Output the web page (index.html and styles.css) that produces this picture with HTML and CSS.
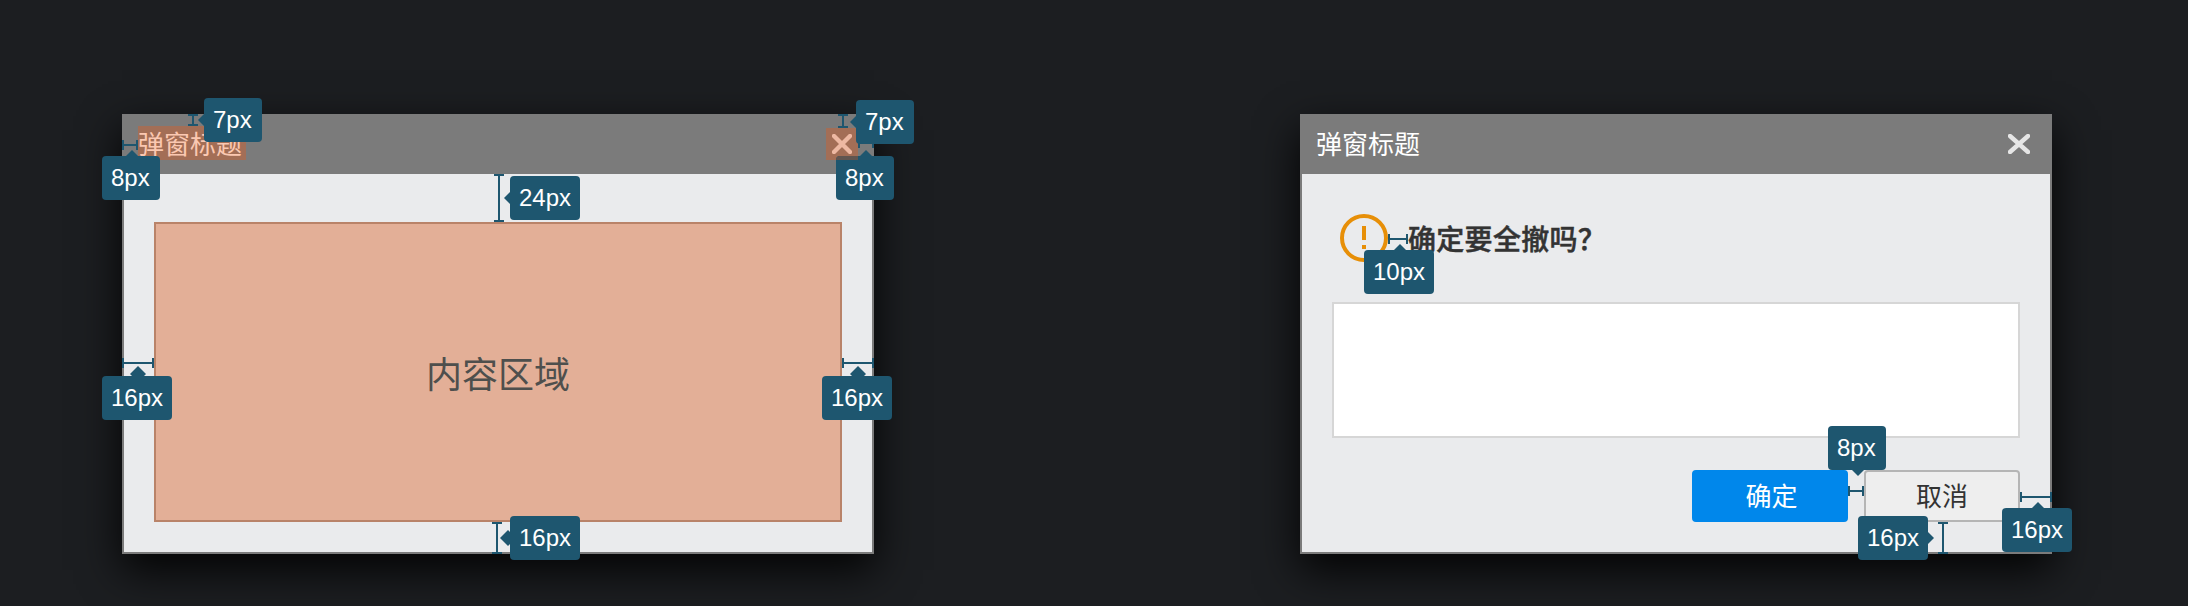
FILE: index.html
```html
<!DOCTYPE html>
<html lang="zh-CN">
<head>
<meta charset="utf-8">
<title>弹窗标题</title>
<link rel="stylesheet" href="styles.css">
</head>
<body>
<main class="board">
  <section class="dialog">
    <header class="dialog-header">
      <h2 class="dialog-title marked">弹窗标题</h2>
      <span class="close marked"><svg width="20" height="20" viewBox="0 0 20 20"><path d="M2 2L18 18M18 2L2 18"/></svg></span>
    </header>
    <div class="dialog-body">
      <div class="content-area">内容区域</div>
    </div>

    <i class="rule v r-title-top"></i><i class="rule h r-title-left"></i>
    <i class="rule v r-close-top"></i><i class="rule h r-close-right"></i>
    <i class="rule v r-body-top"></i><i class="rule h r-body-left"></i>
    <i class="rule h r-body-right"></i><i class="rule v r-body-bottom"></i>
    <span class="tag left t-title-top">7px</span>
    <span class="tag up t-title-left">8px</span>
    <span class="tag up t-close-right">8px</span>
    <i class="tag-overlap"></i>
    <span class="tag left t-close-top">7px</span>
    <span class="tag left t-body-top">24px</span>
    <span class="tag up far wide-left t-body-left">16px</span>
    <span class="tag up far wide-left t-body-right">16px</span>
    <span class="tag left far t-body-bottom">16px</span>
  </section>

  <section class="dialog">
    <header class="dialog-header">
      <h2 class="dialog-title">弹窗标题</h2>
      <span class="close"><svg width="22" height="20" viewBox="0 0 22 20"><path d="M2 2L20 18M20 2L2 18"/></svg></span>
    </header>
    <div class="dialog-body confirm">
      <div class="message">
        <svg class="warning" width="48" height="48" viewBox="0 0 48 48"><circle cx="24" cy="24" r="22"/><path d="M24 12V26M24 31V35"/></svg>
        <p class="question">确定要全撤吗？</p>
      </div>
      <div class="input-box"></div>
      <div class="actions">
        <button class="btn primary">确定</button>
        <button class="btn">取消</button>
      </div>
    </div>

    <i class="rule h r-icon"></i><i class="rule h r-buttons"></i>
    <i class="rule v r-actions-bottom"></i><i class="rule h r-actions-right"></i>
    <span class="tag up t-icon">10px</span>
    <span class="tag down t-buttons">8px</span>
    <span class="tag right t-actions-bottom">16px</span>
    <span class="tag up t-actions-right">16px</span>
  </section>
</main>
</body>
</html>
```
FILE: styles.css
```css
* { box-sizing: border-box; }
body {
  margin: 0;
  background: #1c1e21;
  font-family: "Liberation Sans", "Noto Sans CJK SC", sans-serif;
}
.board {
  display: flex;
  gap: 426px;
  width: 2188px;
  height: 606px;
  padding: 114px 0 0 122px;
  overflow: hidden;
}
.dialog {
  position: relative;
  display: flex;
  flex-direction: column;
  flex: none;
  width: 752px;
  height: 440px;
  box-shadow: 0 16px 40px rgba(0, 0, 0, .9);
}
.dialog-header {
  display: flex;
  align-items: flex-start;
  justify-content: space-between;
  height: 60px;
  padding: 12px 16px 0;
  background: #7b7b7b;
}
.dialog-title {
  width: 108px;
  height: 34px;
  margin: 0;
  color: #fff;
  font: 400 26px/34px "Noto Sans CJK SC", sans-serif;
  white-space: nowrap;
}
.close {
  display: flex;
  align-items: center;
  justify-content: center;
  width: 32px;
  height: 32px;
  margin-top: 2px;
}
.dialog:last-child .close { margin-right: 1px; }
.close path { fill: none; stroke: #e6e6e6; stroke-width: 4.4; stroke-linecap: round; }
.dialog-title.marked { background: #a36e56; color: #fbc8b1; }
.close.marked { background: #a36e56; }
.close.marked path { stroke: #edb8a2; }
.dialog-body {
  flex: 1;
  display: flex;
  flex-direction: column;
  padding: 48px 30px 30px;
  border: solid #7b7b7b;
  border-width: 0 2px 2px;
  background: #eaebed;
}
.content-area {
  flex: 1;
  display: flex;
  align-items: center;
  justify-content: center;
  border: 2px solid #b98369;
  background: #e3af97;
  color: #4e4f4d;
  font: 400 36px/50px "Noto Sans CJK SC", sans-serif;
}
.dialog-body.confirm { padding-top: 40px; }
.message {
  display: flex;
  align-items: center;
  gap: 20px;
  height: 48px;
  margin: 0 0 40px 8px;
}
.warning { fill: none; stroke: #e78f08; stroke-width: 4; }
.question {
  margin: 0;
  color: #333;
  font: 500 28px/48px "Noto Sans CJK SC", sans-serif;
  letter-spacing: .3px;
  -webkit-text-stroke: .5px #333;
}
.input-box { height: 136px; border: 2px solid #d6d6d6; background: #fff; }
.actions {
  display: flex;
  justify-content: flex-end;
  gap: 16px;
  margin-top: 32px;
}
.btn {
  width: 156px;
  height: 52px;
  padding: 0 0 2px;
  border: 2px solid #b5b5b5;
  border-radius: 4px;
  background: #eee;
  color: #333;
  font: 400 26px/46px "Noto Sans CJK SC", sans-serif;
}
.btn.primary {
  padding-left: 3px;
  border-color: #0087eb;
  background: #0087eb;
  color: #fff;
}

/* Measuring rules: a 2px line with a cap at each end */
.rule { position: absolute; }
.rule.h {
  height: 10px;
  border: solid #1e566f;
  border-width: 0 2px;
  background: linear-gradient(#1e566f, #1e566f) 0 4px / 100% 2px no-repeat;
}
.rule.v {
  width: 10px;
  border: solid #1e566f;
  border-width: 2px 0;
  background: linear-gradient(#1e566f, #1e566f) 4px 0 / 2px 100% no-repeat;
}
.r-title-top { left: 66px; top: 0; height: 12px; }
.r-title-left { left: 0; top: 26px; width: 16px; }
.r-close-top { left: 716px; top: 0; height: 14px; }
.r-close-right { left: 736px; top: 24px; width: 16px; }
.r-body-top { left: 372px; top: 60px; height: 48px; }
.r-body-left { left: 0; top: 244px; width: 32px; }
.r-body-right { left: 720px; top: 244px; width: 32px; }
.r-body-bottom { left: 370px; top: 408px; height: 32px; }
.r-icon { left: 88px; top: 120px; width: 20px; }
.r-buttons { left: 548px; top: 372px; width: 16px; }
.r-actions-bottom { left: 638px; top: 408px; height: 32px; }
.r-actions-right { left: 720px; top: 378px; width: 32px; }

/* Measurement tags with a diamond pointer */
.tag {
  --reach: 6px;
  position: absolute;
  height: 44px;
  padding: 0 9px;
  border-radius: 4px;
  background: #1e566f;
  color: #fff;
  font-size: 24px;
  line-height: 44px;
  white-space: nowrap;
}
.tag::before {
  content: "";
  position: absolute;
  width: 16px;
  height: 16px;
  background: #1e566f;
  clip-path: polygon(50% 0, 100% 50%, 50% 100%, 0 50%);
}
.far { --reach: 10px; }
.up::before { left: calc(50% - 7px); top: calc(0px - var(--reach)); }
.up.wide-left::before { left: 28px; }
.down::before { left: 22px; bottom: -6px; }
.left::before { left: calc(0px - var(--reach)); top: 14px; }
.right::before { right: -6px; top: 14px; }
.t-title-top { left: 82px; top: -16px; width: 58px; }
.t-title-left { left: -20px; top: 42px; width: 58px; }
.t-close-right { left: 714px; top: 42px; width: 58px; }
.t-close-top { left: 734px; top: -14px; width: 58px; }
.t-body-top { left: 388px; top: 62px; width: 70px; }
.t-body-left { left: -20px; top: 262px; width: 70px; }
.t-body-right { left: 700px; top: 262px; width: 70px; }
.t-body-bottom { left: 388px; top: 402px; width: 70px; }
.t-icon { left: 64px; top: 136px; width: 70px; }
.t-buttons { left: 528px; top: 312px; width: 58px; }
.t-actions-bottom { left: 558px; top: 402px; width: 70px; }
.t-actions-right { left: 702px; top: 394px; width: 70px; }
.tag-overlap {
  position: absolute;
  left: 714px;
  top: 42px;
  width: 22px;
  height: 4px;
  border-top-left-radius: 4px;
  background: #605550;
}
```
